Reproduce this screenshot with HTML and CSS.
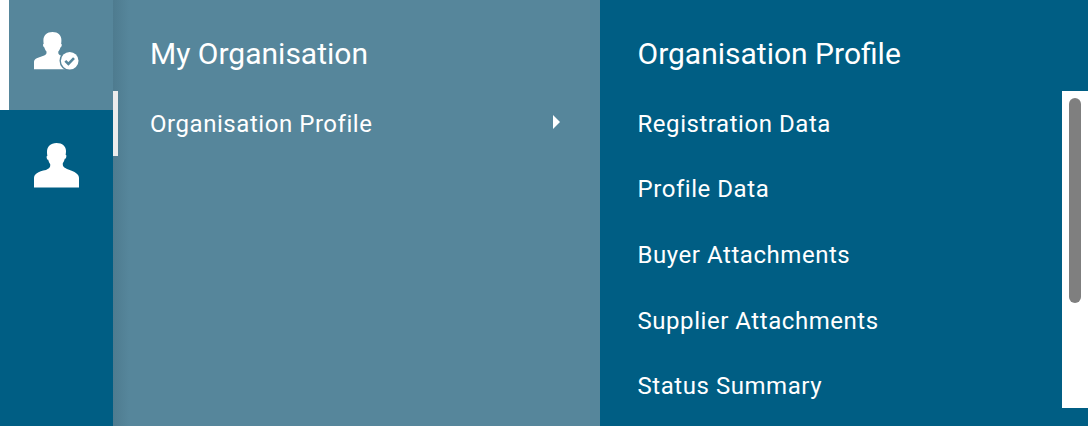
FILE: index.html
```html
<!DOCTYPE html>
<html lang="en">
<head>
<meta charset="utf-8">
<title>My Organisation</title>
<link rel="stylesheet" href="styles.css">
</head>
<body>
<div class="app">
  <nav class="rail">
    <div class="rail-tab active">
      <svg class="user-icon badge-icon" viewBox="0 0 46 39" aria-hidden="true">
        <path d="M18.500 0C13 0 9.400 3.400 9.400 8.200c0 1.300.1 2.600.3 3.600-.7.200-.8 1.100-.5 2.200.3.900.7 1.400 1.200 1.400.5 1.700 1.100 3 2.100 4.100v1.500c0 1.200-1.100 2-3 2.800-2.700 1.100-5.800 1.800-7.700 3C.6 27.700 0 28.700 0 30.200v7.100h37v-7.100c0-1.500-.6-2.500-2-3.400-1.900-1.200-5-1.900-7.700-3-1.900-.8-3-1.600-3-2.800v-1.500c1-1.100 1.600-2.400 2.100-4.100.5 0 .9-.5 1.200-1.400.3-1.100.2-2-.5-2.200.2-1 .3-2.300.3-3.600C27.600 3.400 24 0 18.500 0z"/>
        <circle class="badge-ring" cx="35.700" cy="28.700" r="10.200"/>
        <circle cx="35.700" cy="28.700" r="8.800"/>
        <path class="badge-check" d="M31.300 28.900l3.100 3.100 5.600-5.800"/>
      </svg>
    </div>
    <div class="rail-tab">
      <svg class="user-icon" viewBox="0 0 45 45" aria-hidden="true">
        <path d="M22.500 0C16.500 0 13 3.500 13 9c0 1.500.2 3 .4 3.800-.8.2-1 1.200-.6 2.400.3 1 .8 1.600 1.400 1.600.5 1.800 1.100 3.300 2 4.300v1.900c0 1.500-1.800 2.900-4.200 3.900C8.200 27.400 5 28.200 2.500 30.500 .8 31.700 0 33.200 0 35v9.500h45V35c0-1.800-.8-3.300-2.500-4.500-2.500-2.300-5.700-3.100-9.500-4.600-2.400-1-4.200-2.400-4.200-3.900v-1.900c.9-1 1.500-2.500 2-4.300.6 0 1.100-.6 1.400-1.600.4-1.200.2-2.200-.6-2.400.2-.8.4-2.300.4-3.800C32 3.500 28.500 0 22.500 0z"/>
      </svg>
    </div>
  </nav>
  <section class="panel panel-mid">
    <h2 class="panel-title">My Organisation</h2>
    <ul class="menu">
      <li class="menu-item current">Organisation Profile<span class="chevron"></span></li>
    </ul>
  </section>
  <section class="panel panel-right">
    <h2 class="panel-title">Organisation Profile</h2>
    <div class="scroll-area">
      <ul class="menu">
        <li class="menu-item">Registration Data</li>
        <li class="menu-item">Profile Data</li>
        <li class="menu-item">Buyer Attachments</li>
        <li class="menu-item">Supplier Attachments</li>
        <li class="menu-item">Status Summary</li>
      </ul>
      <div class="scrollbar"><div class="thumb"></div></div>
    </div>
  </section>
</div>
</body>
</html>
```
FILE: styles.css
```css
* { box-sizing: border-box; }
html, body { margin: 0; height: 100%; overflow: hidden; background: #fff; }
body { font-family: Roboto, "Liberation Sans", sans-serif; color: #fff; }
.app { display: flex; width: 1088px; height: 426px; }

.rail { width: 113px; flex: none; display: flex; flex-direction: column; background: #005e84; }
.rail-tab { height: 110px; padding: 33px 0 0 34px; flex: none; }
.rail-tab.active { margin-left: 9px; background: #56869b; padding: 32px 0 0 25px; box-shadow: -9px 0 0 #fff; }
.user-icon { width: 45px; height: 45px; fill: #fff; display: block; }
.badge-icon { width: 46px; height: 39px; }
.badge-ring { fill: #56869b; }
.badge-check { fill: none; stroke: #56869b; stroke-width: 2.6; }

.panel { height: 426px; }
.panel-mid { width: 487px; flex: none; background: linear-gradient(90deg, #4e7b8f 0, #56869b 16px); }
.panel-right { flex: 1; background: #005e84; }
.panel-title { margin: 0; height: 91px; font-size: 30px; font-weight: 400; line-height: 34px; padding-top: 37px; }
.panel-mid .panel-title { padding-left: 37px; }
.panel-right .panel-title { padding-left: 37.5px; }

.menu { list-style: none; margin: 0; padding: 0; }
.menu-item { height: 65.6px; font-size: 24px; line-height: 66.76px; font-weight: 400; letter-spacing: .55px; }
.menu-item:first-child { height: 65px; }
.menu-item:nth-child(2) { height: 66.2px; }
.panel-mid .menu-item { padding-left: 37px; }
.panel-right .menu-item { padding-left: 37.5px; }
.current { display: flex; align-items: flex-start; justify-content: space-between; padding-right: 40px; border-left: 5px solid #ececec; }
.panel-mid .menu-item.current { padding-left: 32px; }
.chevron { width: 0; height: 0; margin-top: 24px; border-left: 7px solid #fff; border-top: 7.5px solid transparent; border-bottom: 7.5px solid transparent; }

.scroll-area { display: flex; justify-content: space-between; }
.scrollbar { width: 26px; height: 317px; background: #fff; padding: 7px; flex: none; }
.thumb { width: 12px; height: 205px; border-radius: 6px; background: #7f7f7f; }
```
